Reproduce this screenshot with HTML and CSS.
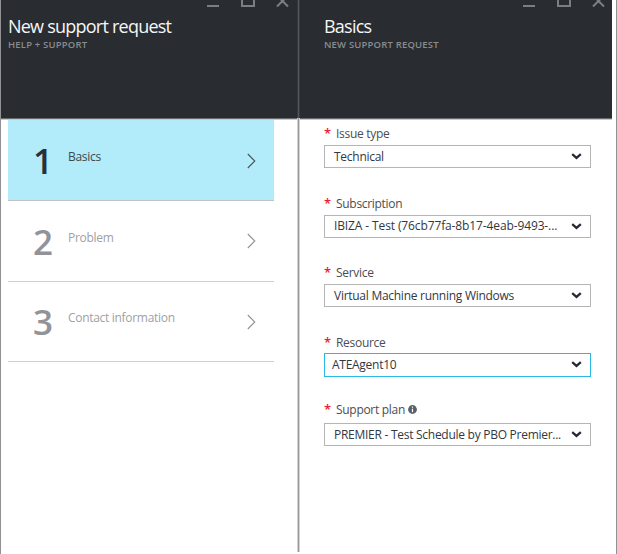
FILE: index.html
```html
<!DOCTYPE html>
<html lang="en">
<head>
<meta charset="utf-8">
<title>New support request</title>
<link rel="stylesheet" href="styles.css">
</head>
<body>
<svg width="0" height="0" class="defs">
  <symbol id="window" viewBox="0 0 84 8"><path d="M0 6h12M35 0v6h12V0M70 6.500l11-11M70-4.500l11 11" fill="none" stroke="currentColor" stroke-width="2"/></symbol>
  <symbol id="next" viewBox="0 0 9 16"><path d="M.8 1l7 7-7 7" fill="none" stroke="currentColor" stroke-width="1.100"/></symbol>
  <symbol id="down" viewBox="0 0 11 7"><path d="M1.200 1.200l4.300 3.700 4.300-3.700" fill="none" stroke="currentColor" stroke-width="2.300"/></symbol>
</svg>
<main class="portal">
  <section class="blade blade-left">
    <header class="head">
      <svg class="controls"><use href="#window"/></svg>
      <h1 class="title">New support request</h1>
      <p class="subtitle">HELP + SUPPORT</p>
    </header>
    <ol class="steps">
      <li class="step active"><b class="num">1</b><span class="name">Basics</span><svg class="next"><use href="#next"/></svg></li>
      <li class="step"><b class="num">2</b><span class="name">Problem</span><svg class="next"><use href="#next"/></svg></li>
      <li class="step"><b class="num">3</b><span class="name">Contact information</span><svg class="next"><use href="#next"/></svg></li>
    </ol>
  </section>
  <div class="divider"></div>
  <section class="blade blade-right">
    <header class="head">
      <svg class="controls"><use href="#window"/></svg>
      <h2 class="title">Basics</h2>
      <p class="subtitle">NEW SUPPORT REQUEST</p>
    </header>
    <div class="form">
      <div class="field"><div class="label"><i class="star">*</i>Issue type</div><div class="select"><span>Technical</span><svg class="down"><use href="#down"/></svg></div></div>
      <div class="field"><div class="label"><i class="star">*</i>Subscription</div><div class="select"><span class="subscription">IBIZA - Test (76cb77fa-8b17-4eab-9493-...</span><svg class="down"><use href="#down"/></svg></div></div>
      <div class="field"><div class="label"><i class="star">*</i>Service</div><div class="select"><span>Virtual Machine running Windows</span><svg class="down"><use href="#down"/></svg></div></div>
      <div class="field"><div class="label"><i class="star">*</i>Resource</div><div class="select focus"><span>ATEAgent10</span><svg class="down"><use href="#down"/></svg></div></div>
      <div class="field plan"><div class="label"><i class="star">*</i>Support plan<svg class="info" viewBox="0 0 9 9"><circle cx="4.500" cy="4.500" r="4.400" fill="#596067"/><path d="M4.500 1.500v1.300M4.500 3.700v3.500" fill="none" stroke="#fff" stroke-width="1.200"/></svg></div><div class="select"><span>PREMIER - Test Schedule by PBO Premier...</span><svg class="down"><use href="#down"/></svg></div></div>
    </div>
  </section>
</main>
</body>
</html>
```

FILE: styles.css
```css
* { box-sizing: border-box; }
body { margin: 0; background: #fff; font: 12px/16px "Open Sans", "Noto Sans", sans-serif; color: #33373f; }
h1, h2, p, ol { margin: 0; padding: 0; }
.defs { display: block; }
.portal { width: 617px; height: 554px; display: flex; border-left: 1px solid #929294; border-right: 1px solid #929294; }
.blade-left { width: 296px; }
.blade-right { width: 312px; }
.divider { width: 3px; height: 552px; background: linear-gradient(90deg, #353a3d 1px, #53585c 1px 2px, #353a3d 2px) 0 0 / 3px 118px no-repeat, linear-gradient(90deg, #d2d2d2 1px, #999 1px 2px, #d2d2d2 2px); }
.head { height: 120px; padding: 0 7px; background: #292d31; border-bottom: 1px solid #cacaca; box-shadow: inset 0 -1px #67696b; color: #f6f6f6; }
.blade-right .head { padding-left: 24px; }
.controls { display: block; width: 84px; height: 8px; margin-left: 199px; color: #7b7f82; }
.title { margin-top: 6px; font-size: 18px; line-height: 24px; font-weight: 400; letter-spacing: -.77px; white-space: nowrap; }
.subtitle { margin-top: 1px; font-size: 9.500px; line-height: 12px; font-weight: 600; color: #888c8f; letter-spacing: .18px; white-space: nowrap; }
.steps { width: 266px; margin-left: 7px; list-style: none; }
.step { height: 80.500px; border-bottom: 1px solid #cfcfcf; display: flex; align-items: center; color: #a0a1a3; }
.step.active { height: 81px; background: #b2ebfa; color: #3b4950; border-color: #bfc4c6; }
.num { width: 60px; padding-left: 25px; font-size: 35px; line-height: 40px; font-weight: 600; color: #929397; margin-top: 2px; }
.active .num { color: #2a3038; }
.name { flex: 1; margin-top: -6px; letter-spacing: -.3px; }
.next { width: 9px; height: 16px; margin: 1px 18px 0 0; color: #929292; }
.active .next { color: #47545a; }
.form { padding: 5px 0 0 24px; }
.field { width: 267px; height: 69.500px; }
.label { height: 20px; line-height: 17.500px; display: flex; color: #4b4d52; letter-spacing: -.3px; }
.star { width: 12px; font-style: normal; font-weight: 600; font-size: 13px; color: #ed1c2e; }
.select { height: 23px; padding: 0 8px 0 9px; border: 1px solid #b5b5b5; display: flex; align-items: center; justify-content: space-between; white-space: nowrap; letter-spacing: -.27px; }
.subscription { letter-spacing: -.12px; }
.focus { height: 24px; margin-top: -1px; border-color: #28b9e5; padding-left: 7px; }
.focus span { padding-top: 1px; }
.down { width: 11px; height: 7px; color: #252a35; }
.info { width: 9px; height: 9px; margin: 4px 0 0 3px; }
.plan { margin-top: -2px; }
.plan .label { height: 22px; }
```
